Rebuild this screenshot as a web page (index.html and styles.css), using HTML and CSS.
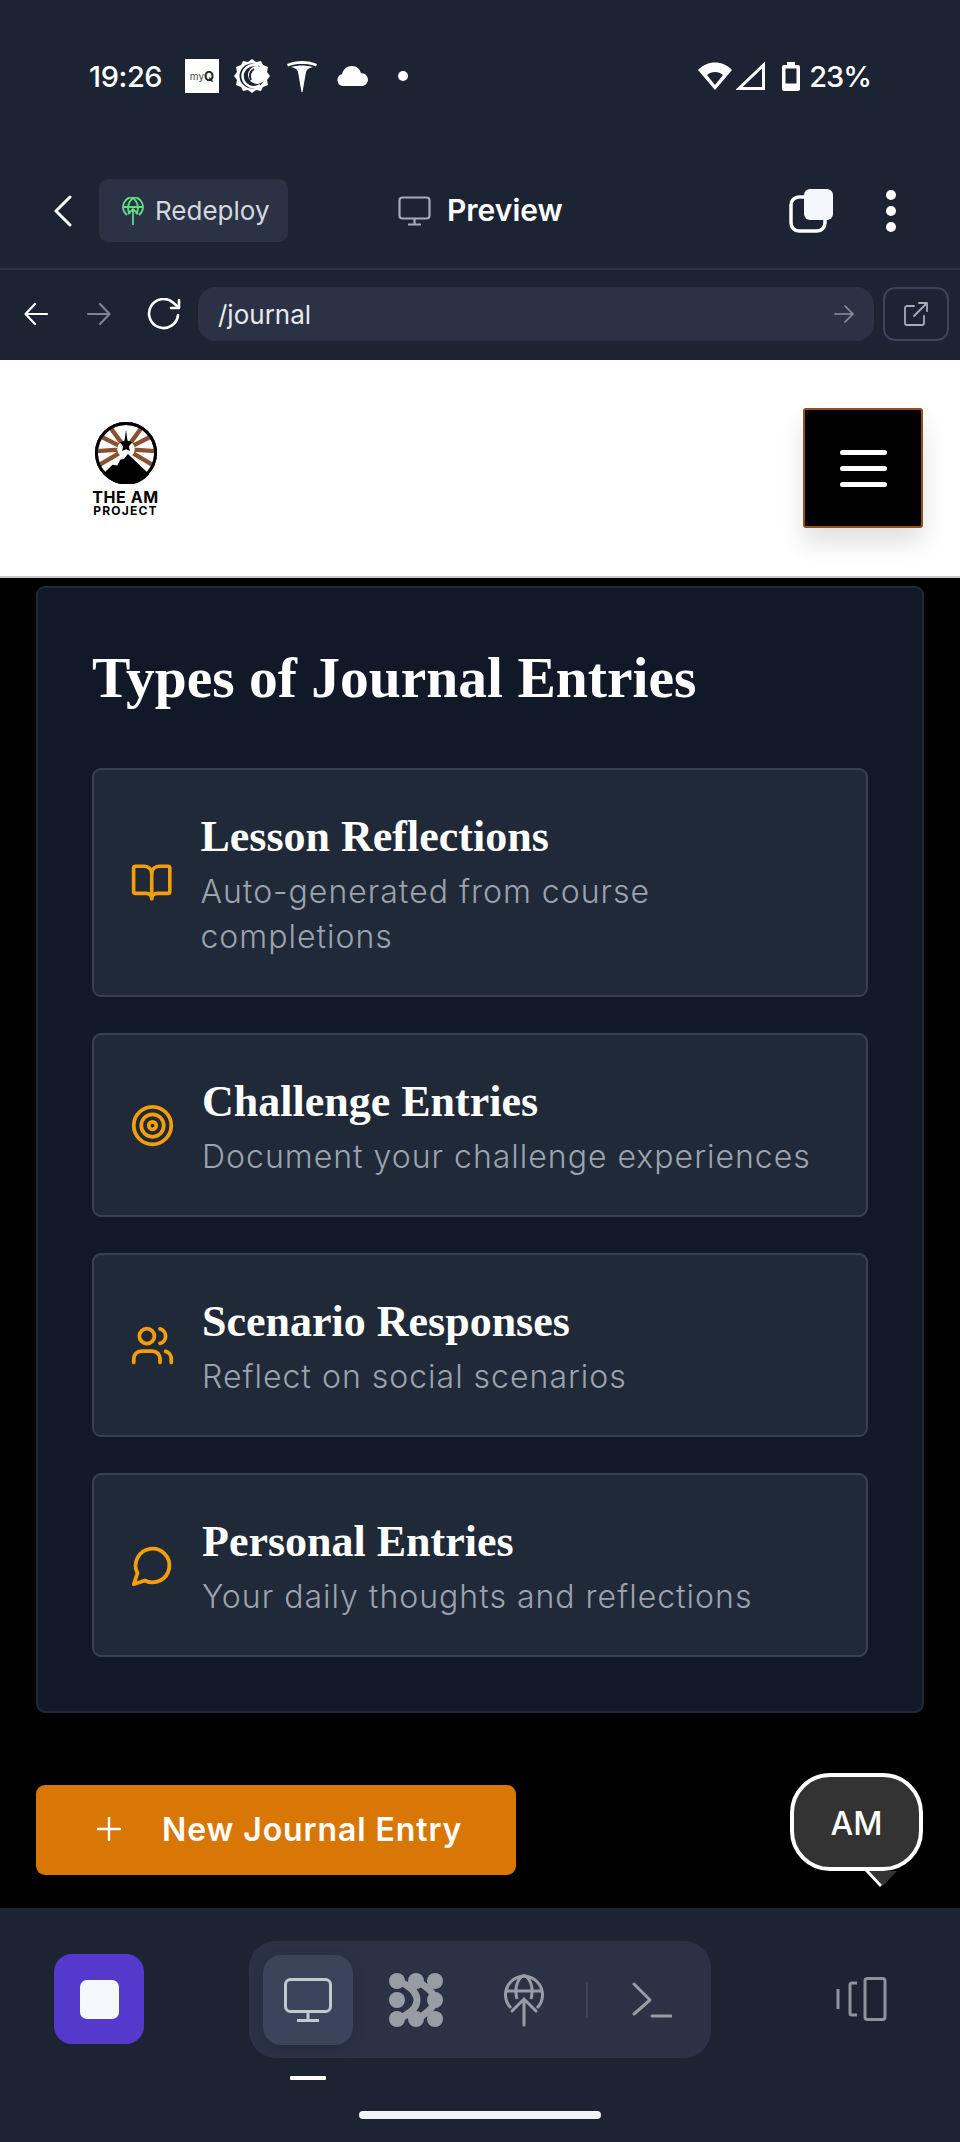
FILE: index.html
```html
<!DOCTYPE html>
<html lang="en">
<head>
    <meta charset="UTF-8">
    <meta name="viewport" content="width=device-width, initial-scale=1.0">
    <title>Journal</title>
    <link rel="stylesheet" href="styles.css">
</head>
<body>
    <div class="status-bar">
        <div class="status-left">
            <span class="status-time">19:26</span>
            <span class="myq"><span>my</span><b>Q</b></span>
            <svg class="ic-gear" width="36" height="36" viewBox="0 0 36 36">
                <path fill="#fff" d="M18 1l4 3 5-1 2 4 5 2-1 5 3 4-3 4 1 5-5 2-2 4-5-1-4 3-4-3-5 1-2-4-5-2 1-5-3-4 3-4-1-5 5-2 2-4 5 1z"/>
                <circle cx="18" cy="18" r="12.5" fill="#1c2333"/>
                <path fill="none" stroke="#fff" stroke-width="2.5" d="M24 8a11 11 0 1 0 2 19"/>
                <circle cx="23" cy="17" r="9" fill="#fff"/>
                <path fill="none" stroke="#1c2333" stroke-width="2" d="M20 11a8 8 0 0 0-3 11"/>
            </svg>
            <svg class="ic-tesla" width="30" height="32" viewBox="0 0 30 32">
                <path fill="#fff" d="M0 4C9 0 21 0 30 4l-1 2.500C25 4.500 20 4 15 4S5 4.500 1 6.500z"/>
                <path fill="#fff" d="M4 7c4-1 8-1.500 11-1.500S22 6 26 7c-4 1-6 2-7 5l-3.500 20h-1L11 12C10 9 8 8 4 7z"/>
            </svg>
            <svg class="ic-cloud" width="32" height="20" viewBox="0 0 32 20">
                <path fill="#fff" d="M6 20a6 6 0 0 1-1-11.800C6 3.500 10 0 15 0c4.500 0 8 3 9 7.200a6.500 6.500 0 0 1 2 12.800z"/>
            </svg>
            <span class="status-dot"></span>
        </div>
        <div class="status-right">
            <svg width="34" height="28" viewBox="0 0 34 28">
                <path fill="#fff" d="M17 28L0 8C9-2 25-2 34 8zM17 10c-3 0-6 1-8 3l8 10 8-10c-2-2-5-3-8-3z" fill-rule="evenodd"/>
            </svg>
            <svg width="29" height="28" viewBox="0 0 29 28">
                <path fill="none" stroke="#fff" stroke-width="3" d="M3 26.500L27.500 3v23.500z"/>
                <path fill="#fff" d="M0 28h6v-3z"/>
            </svg>
            <svg class="ic-batt" width="18" height="29" viewBox="0 0 18 29">
                <path fill="#fff" d="M5 0h8v3h3a2 2 0 0 1 2 2v22a2 2 0 0 1-2 2H2a2 2 0 0 1-2-2V5a2 2 0 0 1 2-2h3z"/>
                <rect x="3.500" y="6.500" width="11" height="15" fill="#1c2333"/>
            </svg>
            <span class="status-pct">23%</span>
        </div>
    </div>

    <div class="top-bar">
        <svg class="top-back" width="18" height="32" viewBox="0 0 18 32">
            <path fill="none" stroke="#fff" stroke-width="3" stroke-linecap="round" stroke-linejoin="round" d="M16 2L2 16l14 14"/>
        </svg>
        <div class="redeploy">
            <svg width="22" height="28" viewBox="0 0 22 28" fill="none" stroke="#5fdc83" stroke-width="1.800">
                <path d="M5 18a10 10 0 1 1 12 0"/>
                <path d="M1 10h20M11 1c-6 5-6 12-3 16M11 1c6 5 6 12 3 16M11 28V12M6 17l5-5 5 5"/>
            </svg>
            <span>Redeploy</span>
        </div>
        <div class="preview">
            <svg width="33" height="30" viewBox="0 0 33 30" fill="none" stroke="#a6abb5" stroke-width="2.200">
                <rect x="1.500" y="1.500" width="30" height="21" rx="3"/>
                <path d="M16.500 23v5M10 28.500h13"/>
            </svg>
            <span>Preview</span>
        </div>
        <svg class="top-tabs" width="44" height="44" viewBox="0 0 44 44">
            <rect x="2" y="8" width="34" height="34" rx="8" fill="none" stroke="#fff" stroke-width="3.500"/>
            <rect x="15" y="0" width="29" height="31" rx="6" fill="#f4f7fb"/>
        </svg>
        <div class="top-dots"><i></i><i></i><i></i></div>
    </div>

    <div class="url-bar">
        <svg class="url-arrow" width="24" height="24" viewBox="0 0 24 24" fill="none" stroke="#fff" stroke-width="2.200" stroke-linecap="round" stroke-linejoin="round">
            <path d="M23 12H2M11 2L1.500 12 11 22"/>
        </svg>
        <svg class="url-arrow" width="24" height="24" viewBox="0 0 24 24" fill="none" stroke="#7d8390" stroke-width="2.200" stroke-linecap="round" stroke-linejoin="round">
            <path d="M1 12h21M13 2l9.500 10L13 22"/>
        </svg>
        <svg class="url-reload" width="34" height="32" viewBox="0 0 34 32" fill="none" stroke="#fff" stroke-width="2.600" stroke-linecap="round" stroke-linejoin="round">
            <path d="M31 17a14.500 14.500 0 1 1-5-12.500L31 9"/>
            <path d="M32 2v8h-8"/>
        </svg>
        <div class="url-field">
            <span>/journal</span>
            <svg width="20" height="20" viewBox="0 0 20 20" fill="none" stroke="#8d93a0" stroke-width="1.600" stroke-linecap="round" stroke-linejoin="round">
                <path d="M1 10h17M11 2l8 8-8 8"/>
            </svg>
        </div>
        <div class="url-open">
            <svg width="26" height="26" viewBox="0 0 26 26" fill="none" stroke="#a6abb5" stroke-width="1.800" stroke-linecap="round" stroke-linejoin="round">
                <path d="M11 5H4a2 2 0 0 0-2 2v15a2 2 0 0 0 2 2h15a2 2 0 0 0 2-2v-7M11 15L24 2M16 2h8v8"/>
            </svg>
        </div>
    </div>

    <header class="site-header">
        <div class="logo">
            <svg width="62" height="62" viewBox="0 0 64 64">
                <circle cx="32" cy="32" r="30.500" fill="#fff" stroke="#000" stroke-width="3"/>
                <g stroke="#8a5230" stroke-width="4.500">
                    <path d="M32 28L6 15M32 28L2 30M32 28L5 44M32 28L16 6M32 28L58 15M32 28L62 30M32 28L59 44M32 28L48 6"/>
                </g>
                <circle cx="32" cy="28" r="9" fill="#fff"/>
                <path d="M32 8l1.500 11 5 2-3.500 4 1 5-4-2-4 2 1-5-3.500-4 5-2z" fill="#000"/>
                <path d="M32 30L8 52a30 30 0 0 0 48 0z" fill="#fff"/>
                <path d="M34 33l22 21A30 30 0 0 1 9 53l9-9 5 1 3-6 4-1z" fill="#000"/>
                <circle cx="32" cy="32" r="30.500" fill="none" stroke="#000" stroke-width="3"/>
            </svg>
            <span class="logo-main">THE AM</span>
            <span class="logo-sub">PROJECT</span>
        </div>
        <div class="menu-btn"><i></i><i></i><i></i></div>
    </header>

    <main class="content">
        <section class="panel">
            <h2>Types of Journal Entries</h2>
            <div class="entry-list">
                <div class="entry">
                    <svg class="entry-icon" viewBox="0 0 24 24">
                        <path d="M12 7v14"/>
                        <path d="M3 18a1 1 0 0 1-1-1V4a1 1 0 0 1 1-1h5a4 4 0 0 1 4 4 4 4 0 0 1 4-4h5a1 1 0 0 1 1 1v13a1 1 0 0 1-1 1h-6a3 3 0 0 0-3 3 3 3 0 0 0-3-3z"/>
                    </svg>
                    <div class="entry-text">
                        <h3>Lesson Reflections</h3>
                        <p>Auto-generated from course completions</p>
                    </div>
                </div>
                <div class="entry">
                    <svg class="entry-icon" viewBox="0 0 24 24">
                        <circle cx="12" cy="12" r="10"/>
                        <circle cx="12" cy="12" r="6"/>
                        <circle cx="12" cy="12" r="2"/>
                    </svg>
                    <div class="entry-text">
                        <h3>Challenge Entries</h3>
                        <p>Document your challenge experiences</p>
                    </div>
                </div>
                <div class="entry">
                    <svg class="entry-icon" viewBox="0 0 24 24">
                        <path d="M16 21v-2a4 4 0 0 0-4-4H6a4 4 0 0 0-4 4v2"/>
                        <circle cx="9" cy="7" r="4"/>
                        <path d="M22 21v-2a4 4 0 0 0-3-3.870"/>
                        <path d="M16 3.130a4 4 0 0 1 0 7.750"/>
                    </svg>
                    <div class="entry-text">
                        <h3>Scenario Responses</h3>
                        <p>Reflect on social scenarios</p>
                    </div>
                </div>
                <div class="entry">
                    <svg class="entry-icon" viewBox="0 0 24 24">
                        <path d="M7.900 20A9 9 0 1 0 4 16.100L2 22z"/>
                    </svg>
                    <div class="entry-text">
                        <h3>Personal Entries</h3>
                        <p>Your daily thoughts and reflections</p>
                    </div>
                </div>
            </div>
        </section>

        <button class="new-entry">
            <svg width="24" height="24" viewBox="0 0 24 24" fill="none" stroke="#fff" stroke-width="2.400" stroke-linecap="round">
                <path d="M12 1v22M1 12h22"/>
            </svg>
            New Journal Entry
        </button>

        <div class="chat-bubble">AM</div>
    </main>

    <nav class="bottom-nav">
        <div class="stop-btn"><i></i></div>
        <div class="tool-group">
            <div class="tool tool-active">
                <svg width="48" height="44" viewBox="0 0 48 44" fill="none" stroke="#c3c8d0" stroke-width="3">
                    <rect x="1.500" y="1.500" width="45" height="32" rx="5"/>
                    <path d="M24 34v8M13 42.500h22"/>
                </svg>
            </div>
            <div class="tool">
                <svg width="54" height="54" viewBox="0 0 54 54">
                    <g fill="#989da5">
                        <circle cx="8" cy="8" r="8"/><circle cx="27" cy="8" r="8"/><circle cx="46" cy="8" r="8"/>
                        <circle cx="8" cy="27" r="8"/><circle cx="46" cy="27" r="8"/>
                        <circle cx="8" cy="46" r="8"/><circle cx="27" cy="46" r="8"/><circle cx="46" cy="46" r="8"/>
                    </g>
                    <g fill="none" stroke="#989da5" stroke-width="7">
                        <path d="M8 8c10 3 20 10 20 19S18 43 8 46"/>
                        <path d="M27 8c8 3 19 12 19 19S35 43 27 46"/>
                    </g>
                </svg>
            </div>
            <div class="tool">
                <svg width="40" height="54" viewBox="0 0 40 54" fill="none" stroke="#989da5" stroke-width="3">
                    <path d="M7 35a18.500 18.500 0 1 1 26 0"/>
                    <path d="M2 18h36M20 2c-9 5-9 17-7 24M20 2c9 5 9 17 7 24"/>
                    <path d="M20 52V26M8 38l12-12 12 12" stroke-linecap="round"/>
                </svg>
            </div>
            <span class="tool-sep"></span>
            <div class="tool tool-term">
                <svg width="40" height="36" viewBox="0 0 40 36" fill="none" stroke="#989da5" stroke-width="3" stroke-linecap="round" stroke-linejoin="round">
                    <path d="M2 2l16 16L2 32"/>
                    <path d="M20 34h19"/>
                </svg>
            </div>
            <span class="tool-mark"></span>
        </div>
        <svg class="nav-devices" width="51" height="44" viewBox="0 0 51 44" fill="none" stroke="#8d929b" stroke-width="3">
            <rect x="29" y="1.500" width="20" height="41" rx="2.500"/>
            <path d="M21 6h-5a2 2 0 0 0-2 2v28a2 2 0 0 0 2 2h5M2 12v20"/>
        </svg>
        <span class="home-bar"></span>
    </nav>
</body>
</html>
```

FILE: styles.css
```css
* {
    box-sizing: border-box;
}
body {
    margin: 0;
    width: 960px;
    height: 2142px;
    display: flex;
    flex-direction: column;
    background-color: #000;
    font-family: Inter, "Liberation Sans", sans-serif;
    color: #fff;
    overflow: hidden;
}
svg {
    display: block;
    flex-shrink: 0;
}

/* barra de estado */
.status-bar {
    height: 152px;
    padding: 0 89px;
    display: flex;
    align-items: center;
    justify-content: space-between;
    background-color: #1c2333;
}
.status-left,
.status-right {
    display: flex;
    align-items: center;
}
.status-time {
    width: 96px;
    font-size: 29px;
    font-weight: 500;
    letter-spacing: -0.4px;
}
.myq {
    width: 34px;
    height: 34px;
    margin-right: 15px;
    display: flex;
    align-items: center;
    justify-content: center;
    background-color: #fff;
    color: #444;
    font-size: 10px;
}
.myq b {
    color: #222;
    font-size: 13px;
}
.ic-gear {
    margin-right: 17px;
}
.ic-tesla {
    margin-right: 20px;
}
.ic-cloud {
    margin-right: 29px;
}
.status-dot {
    width: 10px;
    height: 10px;
    border-radius: 50%;
    background-color: #fff;
}
.status-right {
    gap: 4px;
}
.ic-batt {
    margin: 0 5px 0 13px;
}
.status-pct {
    font-size: 29px;
    font-weight: 500;
    letter-spacing: -1px;
}

/* barra superior */
.top-bar {
    height: 118px;
    padding-top: 1px;
    display: flex;
    align-items: center;
    background-color: #1c2333;
    border-bottom: 2px solid #2b3245;
}
.top-back {
    margin: 0 27px 0 54px;
}
.redeploy {
    width: 189px;
    height: 63px;
    padding-left: 23px;
    display: flex;
    align-items: center;
    gap: 11px;
    border-radius: 9px;
    background-color: #2b3245;
    font-size: 26px;
    color: #d5d8de;
}
.preview {
    margin-left: 110px;
    display: flex;
    align-items: center;
    gap: 16px;
    font-size: 30px;
    font-weight: 600;
}
.preview span {
    padding-bottom: 2px;
}
.top-tabs {
    margin-left: auto;
}
.top-dots {
    width: 70px;
    margin-right: 57px;
    padding-left: 53px;
    display: flex;
    flex-direction: column;
    gap: 6px;
}
.top-dots i {
    width: 10px;
    height: 10px;
    border-radius: 50%;
    background-color: #fff;
}

/* barra de url */
.url-bar {
    height: 90px;
    padding-bottom: 2px;
    display: flex;
    align-items: center;
    background-color: #1c2333;
}
.url-arrow {
    margin-left: 24px;
}
.url-arrow + .url-arrow {
    margin-left: 39px;
}
.url-reload {
    margin: 0 17px 0 36px;
}
.url-field {
    width: 676px;
    height: 54px;
    padding: 0 20px;
    display: flex;
    align-items: center;
    justify-content: space-between;
    border-radius: 18px;
    background-color: #2b3245;
    font-size: 26px;
    color: #e8eaee;
}
.url-open {
    width: 66px;
    height: 54px;
    margin-left: 9px;
    display: flex;
    align-items: center;
    justify-content: center;
    border: 2px solid #3c445c;
    border-radius: 12px;
}

/* cabecera del sitio */
.site-header {
    height: 218px;
    padding: 0 37px 0 92px;
    display: flex;
    align-items: center;
    justify-content: space-between;
    background-color: #fff;
    border-bottom: 2px solid #c9c9c9;
}
.logo {
    width: 67px;
    padding-top: 2px;
    display: flex;
    flex-direction: column;
    align-items: center;
    color: #000;
    font-weight: 700;
    line-height: 1;
}
.logo-main {
    margin-top: 5px;
    font-size: 16px;
    letter-spacing: 0.6px;
    white-space: nowrap;
}
.logo-sub {
    font-size: 12px;
    letter-spacing: 1.2px;
    white-space: nowrap;
}
.menu-btn {
    width: 120px;
    height: 120px;
    display: flex;
    flex-direction: column;
    align-items: center;
    justify-content: center;
    gap: 11px;
    border: 2px solid #92501f;
    border-radius: 3px;
    background-color: #000;
    box-shadow: 0 15px 25px rgba(0, 0, 0, 0.12);
}
.menu-btn i {
    width: 47px;
    height: 5px;
    border-radius: 3px;
    background-color: #fff;
}

/* contenido */
.content {
    position: relative;
    flex: 1;
    padding: 8px 36px 0;
    background-color: #000;
}
.panel {
    padding: 54px;
    border: 2px solid #1f2937;
    border-radius: 9px;
    background-color: #111827;
}
.panel h2 {
    margin: 0 0 54px;
    font-family: "Liberation Serif", serif;
    font-size: 57.500px;
    font-weight: 700;
    line-height: 72px;
}
.entry-list {
    display: flex;
    flex-direction: column;
    gap: 36px;
}
.entry {
    padding: 36px;
    display: flex;
    align-items: center;
    gap: 27px;
    border: 2px solid #374151;
    border-radius: 9px;
    background-color: #1f2937;
}
.entry-icon {
    flex-shrink: 1;
    width: 45px;
    height: 45px;
    fill: none;
    stroke: #f59e0b;
    stroke-width: 2;
    stroke-linecap: round;
    stroke-linejoin: round;
}
.entry-text h3 {
    margin: 4px 0 5px;
    font-family: "Liberation Serif", serif;
    font-size: 44px;
    font-weight: 700;
    line-height: 54px;
}
.entry-text p {
    margin: 0;
    font-size: 32px;
    font-weight: 300;
    line-height: 45px;
    letter-spacing: 1px;
    color: #9ca3af;
}

.new-entry {
    width: 480px;
    height: 90px;
    margin-top: 72px;
    padding: 0 0 2px 61px;
    display: flex;
    align-items: center;
    gap: 41px;
    border: none;
    border-radius: 9px;
    background-color: #d97706;
    font-family: inherit;
    font-size: 32px;
    font-weight: 600;
    letter-spacing: 0.9px;
    color: #fff;
}
.chat-bubble {
    position: absolute;
    right: 37px;
    bottom: 37px;
    width: 133px;
    height: 98px;
    padding-top: 2px;
    display: flex;
    align-items: center;
    justify-content: center;
    border: 4px solid #fff;
    border-radius: 40px;
    background-color: #333;
    font-size: 32px;
    font-weight: 500;
}
.chat-bubble::before {
    content: "";
    position: absolute;
    right: 24px;
    bottom: -20px;
    border-left: 15px solid transparent;
    border-right: 15px solid transparent;
    border-top: 16px solid #fff;
}
.chat-bubble::after {
    content: "";
    position: absolute;
    right: 22px;
    bottom: -19px;
    border-left: 14px solid transparent;
    border-right: 14px solid transparent;
    border-top: 15px solid #333;
}

/* navegacion inferior */
.bottom-nav {
    position: relative;
    height: 234px;
    padding: 33px 0 0 54px;
    display: flex;
    align-items: flex-start;
    background-color: #1c2333;
}
.stop-btn {
    width: 90px;
    height: 90px;
    margin-top: 13px;
    display: flex;
    align-items: center;
    justify-content: center;
    border-radius: 18px;
    background-color: #5538cc;
}
.stop-btn i {
    width: 39px;
    height: 39px;
    border-radius: 7px;
    background-color: #f5f8fd;
}
.tool-group {
    position: relative;
    width: 462px;
    height: 117px;
    margin-left: 105px;
    padding-left: 14px;
    display: flex;
    align-items: center;
    border-radius: 27px;
    background-color: #2b3245;
}
.tool {
    width: 90px;
    height: 90px;
    margin-right: 18px;
    display: flex;
    align-items: center;
    justify-content: center;
    border-radius: 18px;
}
.tool-active {
    background-color: #3c445c;
    box-shadow: 0 4px 14px rgba(0, 0, 0, 0.12);
}
.tool-sep {
    width: 2px;
    height: 36px;
    margin: 0 32px 0 -1px;
    background-color: #3c445c;
}
.tool-term {
    width: 64px;
    margin: 0;
}
.tool-mark {
    position: absolute;
    left: 41px;
    bottom: -22px;
    width: 36px;
    height: 4px;
    border-radius: 1px;
    background-color: #fff;
}
.nav-devices {
    margin: 36px 0 0 125px;
}
.home-bar {
    position: absolute;
    left: 359px;
    bottom: 23px;
    width: 242px;
    height: 8px;
    border-radius: 4px;
    background-color: #f1f3f5;
}
```
